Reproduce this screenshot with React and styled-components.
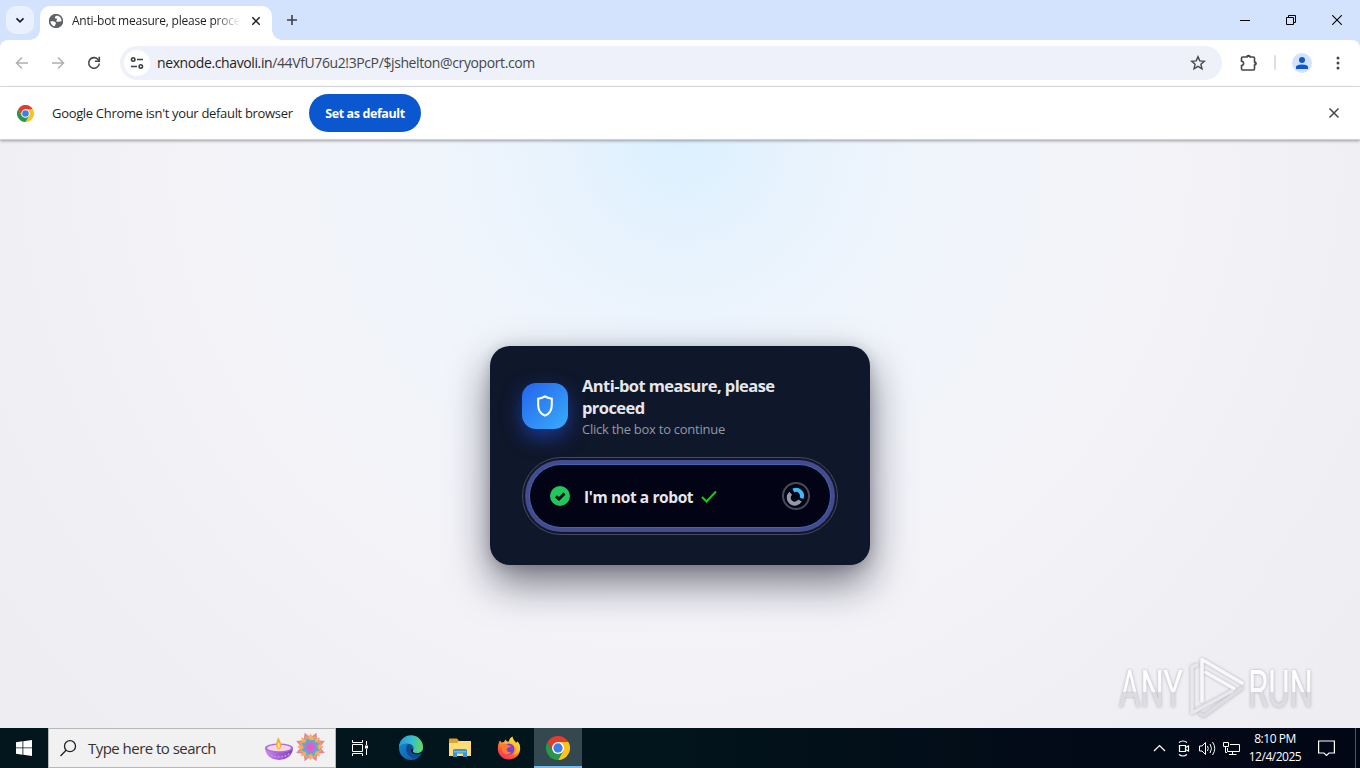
import styled, { createGlobalStyle, css } from 'styled-components';

const GlobalStyle = createGlobalStyle`
  * {
    box-sizing: border-box;
  }

  body {
    margin: 0;
    overflow: hidden;
    font-family: 'Open Sans', 'Noto Sans', sans-serif;
  }

  svg {
    display: block;
    flex: none;
  }
`;

const Screen = styled.div`
  width: 1360px;
  height: 768px;
  display: flex;
  flex-direction: column;
  overflow: hidden;
  background: #d3e3fd;
`;

const TabStrip = styled.div`
  height: 40px;
  flex: none;
  display: flex;
  align-items: flex-start;
  background: #d3e3fd;
`;

const TabSearch = styled.div`
  width: 28px;
  height: 28px;
  margin: 6px 6px 0;
  border-radius: 10px;
  background: #e9f1fe;
  display: grid;
  place-items: center;
`;

const Tab = styled.div`
  position: relative;
  width: 232px;
  height: 34px;
  margin-top: 6px;
  padding: 0 10px 5px 8px;
  display: flex;
  align-items: center;
  background: #fff;
  border-radius: 10px 10px 0 0;

  &::before,
  &::after {
    content: '';
    position: absolute;
    bottom: 0;
    width: 10px;
    height: 10px;
  }

  &::before {
    left: -10px;
    background: radial-gradient(circle at 0 0, transparent 9.5px, #fff 10px);
  }

  &::after {
    right: -10px;
    background: radial-gradient(circle at 100% 0, transparent 9.5px, #fff 10px);
  }
`;

const TabTitle = styled.span`
  width: 168px;
  margin-left: 8px;
  overflow: hidden;
  white-space: nowrap;
  font-size: 12px;
  letter-spacing: -0.22px;
  line-height: 18px;
  color: #1f1f1f;
  mask-image: linear-gradient(90deg, #000 142px, transparent 168px);
`;

const TabClose = styled.div`
  margin-left: 11px;
`;

const NewTab = styled.div`
  margin: 14px 0 0 14px;
`;

const WindowButtons = styled.div`
  margin-left: auto;
  display: flex;

  > div {
    width: 46px;
    height: 40px;
    display: grid;
    place-items: center;
  }
`;

const Toolbar = styled.div`
  height: 47px;
  flex: none;
  display: flex;
  align-items: center;
  padding: 0 13px 1px 14px;
  background: #fff;
  border-bottom: 1px solid #e1e3e8;
  border-radius: 8px 8px 0 0;
`;

const NavIcons = styled.div`
  display: flex;
  gap: 20px;
  margin-right: 18px;
`;

const AddressBar = styled.div`
  width: 1102px;
  height: 34px;
  padding: 0 16px 0 4px;
  display: flex;
  align-items: center;
  border-radius: 17px;
  background: #eef1fa;
`;

const SiteInfo = styled.div`
  width: 26px;
  height: 26px;
  border-radius: 50%;
  background: #fff;
  display: grid;
  place-items: center;
`;

const Url = styled.span`
  flex: 1;
  margin-left: 7px;
  font-size: 14px;
  letter-spacing: -0.39px;
  line-height: 20px;
  color: #474747;

  b {
    font-weight: 400;
    color: #1f1f1f;
  }
`;

const ToolbarActions = styled.div`
  flex: 1;
  display: flex;
  align-items: center;
  margin-left: 17px;
`;

const Divider = styled.div`
  width: 2px;
  height: 15px;
  margin: 0 16px 0 15px;
  border-radius: 1px;
  background: #d9e0ec;
`;

const Avatar = styled.div`
  width: 20px;
  height: 20px;
  margin-right: 16px;
  border-radius: 50%;
  background: #d3e3fd;
  display: grid;
  place-items: center;
`;

const InfoBar = styled.div`
  position: relative;
  z-index: 1;
  height: 53px;
  flex: none;
  padding: 0 20px 0 17px;
  display: flex;
  align-items: center;
  background: #fff;
  border-bottom: 1px solid #cfcfcf;
  box-shadow: 0 1px 3px rgba(0, 0, 0, 0.35);
`;

const InfoText = styled.span`
  width: 241px;
  margin: 0 16px 0 18px;
  white-space: nowrap;
  font-size: 13px;
  letter-spacing: -0.32px;
  color: #1f1f1f;
`;

const DefaultButton = styled.button`
  width: 112px;
  height: 38px;
  margin-right: auto;
  padding: 0;
  border: none;
  border-radius: 19px;
  background: #0b57d0;
  color: #fff;
  font: 700 12.5px 'Open Sans', sans-serif;
  letter-spacing: -0.4px;
  white-space: nowrap;
`;

const Page = styled.main`
  position: relative;
  flex: 1;
  padding-top: 206px;
  background: radial-gradient(circle 880px at 50% 0, #dcf1ff 0%, #e9f3fd 15%, #f1f5fb 32%, #f3f3f8 52%, #efeff4 78%, #ededf2 100%);
`;

const Card = styled.section`
  width: 380px;
  height: 219px;
  margin: 0 auto;
  padding: 29px 32px 0;
  border-radius: 20px;
  background: #0f172a;
  box-shadow: 0 18px 40px rgba(15, 15, 35, 0.55), 0 2px 14px rgba(15, 15, 35, 0.16);
`;

const CardHeader = styled.header`
  display: flex;
  align-items: center;
  gap: 14px;
`;

const ShieldBadge = styled.div`
  width: 46px;
  height: 46px;
  margin-top: -2px;
  flex: none;
  display: grid;
  place-items: center;
  border-radius: 14px;
  background: linear-gradient(135deg, #2563eb, #38adfb);
  box-shadow: 0 8px 20px rgba(37, 84, 235, 0.55);
`;

const CardTitle = styled.h1`
  margin: 0;
  white-space: nowrap;
  font-size: 16.5px;
  font-weight: 700;
  line-height: 22px;
  letter-spacing: -0.57px;
  color: #e5e7eb;
`;

const CardHint = styled.p`
  margin: 0;
  font-size: 13px;
  line-height: 20px;
  letter-spacing: -0.26px;
  color: #9298a8;
`;

const FocusRing = styled.div`
  height: 78px;
  margin-top: 18px;
  padding: 2px;
  border: 1px solid #454b5b;
  border-radius: 39px;
`;

const RobotCheck = styled.div`
  height: 72px;
  padding: 4px;
  border-radius: 36px;
  background: #444b8e;
`;

const RobotInner = styled.div`
  height: 64px;
  padding: 0 20px;
  display: flex;
  align-items: center;
  border: 1px solid #3e68ae;
  border-radius: 32px;
  background: #020314;
`;

const RobotLabel = styled.span`
  margin: 2px auto 0 14px;
  display: flex;
  align-items: center;
  gap: 8px;
  white-space: nowrap;
  font-size: 15.5px;
  font-weight: 700;
  letter-spacing: -0.4px;
  color: #e5e7eb;
`;

const Watermark = styled.div`
  position: absolute;
  left: 1116px;
  top: 515px;
  filter: drop-shadow(0 0 1.5px rgba(110, 110, 120, 0.5));
`;

const TaskBar = styled.footer`
  height: 40px;
  flex: none;
  display: flex;
  background: linear-gradient(90deg, #03161d 0%, #02141c 50%, #020a17 80%, #020716 100%);
`;

const StartButton = styled.div`
  width: 48px;
  display: grid;
  place-items: center;
`;

const SearchBox = styled.div`
  width: 288px;
  padding: 0 7px 0 11px;
  display: flex;
  align-items: center;
  background: #f1f1f1;
  border: 1px solid #b4b8ba;

  span {
    flex: 1;
    margin-left: 11px;
    font-size: 15px;
    letter-spacing: -0.53px;
    color: #333;
  }
`;

const TaskItem = styled.div`
  width: 48px;
  margin-left: ${({ $gap }) => $gap || 0}px;
  display: grid;
  place-items: center;

  ${({ $active }) =>
    $active &&
    css`
      background: #344850;
      box-shadow: inset 0 -2px #76b9ed;
    `}
`;

const Tray = styled.div`
  margin-left: auto;
  display: flex;
  align-items: center;
`;

const Clock = styled.div`
  width: 60px;
  margin: 0 13px 0 4px;
  text-align: center;
  white-space: nowrap;
  color: #fff;
  font-size: 12px;
  line-height: 18px;
  letter-spacing: -0.48px;
`;

const ShowDesktop = styled.div`
  width: 5px;
  height: 40px;
  margin-left: 20px;
  border-left: 1px solid #505965;
`;

const ChromeLogo = ({ size }) => (
  <svg width={size} height={size} viewBox="0 0 48 48">
    <path d="M24 12H44.8A24 24 0 0 1 24 48L34.4 30Z" fill="#fcc31e" />
    <path d="M13.6 30 3.2 12A24 24 0 0 0 24 48L34.4 30Z" fill="#279847" />
    <path d="M24 12H44.8A24 24 0 0 0 3.2 12L13.6 30Z" fill="#e33b2e" />
    <circle cx="24" cy="24" r="12" fill="#fff" />
    <circle cx="24" cy="24" r="9.3" fill="#3f7de8" />
  </svg>
);

const GlobeIcon = () => (
  <svg width="16" height="16" viewBox="0 0 16 16">
    <circle cx="8" cy="8" r="7" fill="#5f6368" />
    <path d="M2 8.500C4 8 6.500 8.500 7.800 9.500 8.300 11 7 11.500 7 12.800L6.300 13.800C3.500 13 2 11 2 8.500Z" fill="#fff" />
    <path d="M9.300 2.200C8.500 3 6.800 3.300 6.800 4.600 7 5.800 8.300 5.300 9 6 9.200 7.200 8 7.400 8.400 8.400 9.600 9.300 11.500 8.600 13.900 8.300 14.200 5 12 2.600 9.300 2.200Z" fill="#fff" />
    <circle cx="8" cy="8" r="6.400" fill="none" stroke="#5f6368" strokeWidth="1.400" />
  </svg>
);

const EdgeLogo = () => (
  <svg width="26" height="26" viewBox="0 0 26 26">
    <defs>
      <linearGradient id="edgeTop" x1="0" y1=".4" x2="1" y2=".5">
        <stop offset="0" stopColor="#219bd8" />
        <stop offset=".5" stopColor="#35bdd0" />
        <stop offset="1" stopColor="#66d95c" />
      </linearGradient>
      <linearGradient id="edgeBody" x1="0" y1="0" x2="1" y2="1">
        <stop offset="0" stopColor="#168fd9" />
        <stop offset="1" stopColor="#0b539d" />
      </linearGradient>
    </defs>
    <circle cx="13" cy="13" r="12" fill="url(#edgeBody)" />
    <path d="M1 12A12 12 0 0 1 25 12.500C25 16 22 18 19 18 16 18 14.500 17 15 16 17.500 12 14 8.500 9.500 8.500 5.500 8.500 2 10 1 12Z" fill="url(#edgeTop)" />
    <path d="M10 9C6.500 13 8 20 14 22.500 18 24 22 21.500 23 19 18 22 12.500 19.500 12.500 15.500 12.500 13.800 14 13 14.800 12.500 14 10 12 9 10 9Z" fill="#10498d" />
    <path d="M12.800 15.500C13.300 19.500 19 20.500 23.500 18.200L26 18V14.500C24.500 17.500 21 18.500 18 18.200 15.700 18 14.500 17 15 16L14.900 13.500C13.700 13.700 12.800 14 12.800 15.500Z" fill="#03161d" />
  </svg>
);

const FolderIcon = () => (
  <svg width="22" height="20" viewBox="0 0 22 20">
    <path d="M0 1.500A1 1 0 0 1 1 .5H8L10 3H22V18H0Z" fill="#dda22e" />
    <path d="M0 5H8L10 3H22V18H0Z" fill="#ffdc75" />
    <path d="M4 19V12.500Q4 11 5.500 11H16.500Q18 11 18 12.500V19H14V15.500H8V19Z" fill="#3997d0" />
    <path d="M5 13H17V14.500H5Z" fill="#6eb9e2" />
  </svg>
);

const FirefoxLogo = () => (
  <svg width="24" height="24" viewBox="0 0 24 24">
    <defs>
      <linearGradient id="foxFire" x1=".8" y1="0" x2=".2" y2="1">
        <stop offset="0" stopColor="#ffef48" />
        <stop offset=".4" stopColor="#ffae26" />
        <stop offset=".7" stopColor="#ff5635" />
        <stop offset="1" stopColor="#f72674" />
      </linearGradient>
    </defs>
    <path d="M3 4.500 4.500 6.500 7 6 8.500 3.500 10 5.500 12 5.500C12 3 14 1 15.500.5 15.500 3 18 5 19 7L20.500 5.500C23 8.500 23.500 11 23 14.500 22 20 17.500 23.500 12 23.500 5.500 23.500.8 18.800.8 12.500.8 9 1.800 6.500 3 4.500Z" fill="url(#foxFire)" />
    <circle cx="12" cy="13" r="5.500" fill="#7643d7" />
    <path d="M4.500 8.500C7.500 7.300 10 8 11.500 9.500L14 10C13.500 11.500 11 11.200 10 12.500 9 14.500 11 17 14.500 16.200 12 19.500 6 19 4.800 14Z" fill="#ff7835" />
    <path d="M15.500.5C15.500 3.500 19.500 5.500 20 10.500 20.500 14 18.500 17.500 16 18.500 20 18 23 15 23 11.500 23 9 22 7 20.500 5.500L19.500 7C18 5 16 3.500 15.500.5Z" fill="#ffca30" opacity=".8" />
  </svg>
);

const petals = [0, 45, 90, 135, 180, 225, 270, 315];

const FestivalArt = () => (
  <svg width="65" height="34" viewBox="0 0 65 34">
    <defs>
      <linearGradient id="bowl" x1="0" y1="0" x2="1" y2="0">
        <stop offset="0" stopColor="#c98af0" />
        <stop offset=".5" stopColor="#a55fdc" />
        <stop offset="1" stopColor="#7f3fb8" />
      </linearGradient>
    </defs>
    <path d="M2 17Q3 28 16 29Q29 28 30 17Z" fill="url(#bowl)" />
    <path d="M5 22Q9 26 16 26T27 22" fill="none" stroke="#c98ae8" strokeWidth="1.500" strokeDasharray="2 1.500" />
    <ellipse cx="16" cy="17" rx="14" ry="4.500" fill="#a86bd8" />
    <ellipse cx="16" cy="17" rx="12" ry="3.300" fill="#f4d4df" />
    <path d="M15 18C11 14 14 11 15 6 18 11 19.500 14 17 18Z" fill="#f9ac3a" />
    <path d="M15.500 17C13.500 14.500 15 13 15.500 11 17 13.500 17.500 15 16.500 17Z" fill="#ffe88a" />
    <g transform="translate(47.500 16) rotate(22.500)">
      {petals.map((a) => (
        <g key={a} transform={`rotate(${a})`}>
          <path d="M-3.500-9 0-15.500 3.500-9Z" fill="#e5839c" />
          <path d="M-4-7 0-13.500 4-7Z" fill="#fbb45c" transform="rotate(22.500)" />
          <path d="M-4.500-6 0-12 4.500-6Z" fill="#f6a55c" />
          <path d="M-3.500-5 0-10 3.500-5Z" fill="#4fb8c4" />
        </g>
      ))}
      <circle r="7" fill="#48bbc7" />
      {petals.map((a) => (
        <ellipse key={a} cy="-3.500" rx="2" ry="3" fill="#b874d6" transform={`rotate(${a})`} />
      ))}
      <circle r="3" fill="#e45bc0" />
    </g>
  </svg>
);

function BrowserTabs() {
  return (
    <TabStrip>
      <TabSearch>
        <svg width="10" height="10" viewBox="0 0 10 10" fill="none" stroke="#1f1f1f" strokeWidth="1.700">
          <path d="M1.500 3.300 5 6.800 8.500 3.300" />
        </svg>
      </TabSearch>
      <Tab>
        <GlobeIcon />
        <TabTitle>Anti-bot measure, please proceed</TabTitle>
        <TabClose>
          <svg width="10" height="10" viewBox="0 0 10 10" stroke="#1f1f1f" strokeWidth="1.500">
            <path d="m1.300 1.300 7.400 7.400M8.700 1.300 1.300 8.700" />
          </svg>
        </TabClose>
      </Tab>
      <NewTab>
        <svg width="12" height="12" viewBox="0 0 12 12" stroke="#3c4043" strokeWidth="1.600">
          <path d="M6 1V11M1 6H11" />
        </svg>
      </NewTab>
      <WindowButtons>
        <div>
          <svg width="10" height="10" viewBox="0 0 10 10" stroke="#000">
            <path d="M0 5.500H10" />
          </svg>
        </div>
        <div>
          <svg width="10" height="10" viewBox="0 0 10 10" fill="none" stroke="#000">
            <path d="M.5 2.500H7.500V9.500H.5ZM2.500 2.500V.5H9.500V7.500H7.500" />
          </svg>
        </div>
        <div>
          <svg width="10" height="10" viewBox="0 0 10 10" stroke="#000" strokeWidth="1.100">
            <path d="m.2.2 9.600 9.600M9.800.2.2 9.800" />
          </svg>
        </div>
      </WindowButtons>
    </TabStrip>
  );
}

function BrowserToolbar() {
  return (
    <Toolbar>
      <NavIcons>
        <svg width="16" height="16" viewBox="0 0 16 16" fill="none" stroke="#adafb2" strokeWidth="1.500">
          <path d="M14 8H3M8 2.500 2.500 8 8 13.500" />
        </svg>
        <svg width="16" height="16" viewBox="0 0 16 16" fill="none" stroke="#adafb2" strokeWidth="1.500">
          <path d="M2 8H13M8 2.500 13.500 8 8 13.500" />
        </svg>
        <svg width="16" height="16" viewBox="0 0 16 16" fill="none" stroke="#474747" strokeWidth="1.600">
          <path d="M13.300 8.500A5.300 5.300 0 1 1 11.800 4.200L13.300 5.900" />
          <path d="M13.300 1.800V6.200H8.900" />
        </svg>
      </NavIcons>
      <AddressBar>
        <SiteInfo>
          <svg width="14" height="14" viewBox="0 0 14 14" fill="none" stroke="#3c4043" strokeWidth="1.600">
            <circle cx="3.200" cy="3.500" r="1.700" />
            <path d="M7 3.500H13M1 10.500H7" />
            <circle cx="10.800" cy="10.500" r="1.700" />
          </svg>
        </SiteInfo>
        <Url>
          <b>nexnode.chavoli.in</b>/44VfU76u2!3PcP/$jshelton@cryoport.com
        </Url>
        <svg width="16" height="16" viewBox="0 0 16 16" fill="none" stroke="#474747" strokeWidth="1.400">
          <path d="m8 1.700 1.800 4.200 4.600.4-3.500 3 1.100 4.500L8 11.400l-4 2.400 1.100-4.500-3.500-3 4.600-.4Z" />
        </svg>
      </AddressBar>
      <ToolbarActions>
        <svg width="20" height="18" viewBox="0 0 20 18">
          <path d="M4 3H8A1.500 1.500 0 0 1 11 3H14.500Q15.500 3 15.500 4V8A1.500 1.500 0 0 1 15.500 11V15Q15.500 16 14.500 16H3.500Q2.500 16 2.500 15V11.500A2 2 0 0 0 2.500 7.300V4Q2.500 3 3.500 3Z" fill="none" stroke="#474747" strokeWidth="1.600" />
          <path d="M7.500 3A2 2 0 0 1 11.500 3ZM15.500 7.500A2 2 0 0 1 15.500 11.500Z" fill="#474747" />
        </svg>
        <Divider />
        <Avatar>
          <svg width="12" height="12" viewBox="0 0 12 12" fill="#0b57d0">
            <circle cx="6" cy="3" r="3" />
            <path d="M0 12V10Q0 7.500 6 7.500T12 10V12Z" />
          </svg>
        </Avatar>
        <svg width="16" height="16" viewBox="0 0 16 16" fill="#474747">
          <circle cx="10" cy="3" r="1.500" />
          <circle cx="10" cy="8" r="1.500" />
          <circle cx="10" cy="13" r="1.500" />
        </svg>
      </ToolbarActions>
    </Toolbar>
  );
}

function DefaultBrowserBar() {
  return (
    <InfoBar>
      <ChromeLogo size={17} />
      <InfoText>Google Chrome isn't your default browser</InfoText>
      <DefaultButton>Set as default</DefaultButton>
      <svg width="12" height="12" viewBox="0 0 12 12" stroke="#474747" strokeWidth="1.500">
        <path d="m1.500 1.500 9 9M10.500 1.500l-9 9" />
      </svg>
    </InfoBar>
  );
}

function CaptchaCard() {
  return (
    <Card>
      <CardHeader>
        <ShieldBadge>
          <svg width="20" height="24" viewBox="0 0 20 24" fill="none" stroke="#fff" strokeWidth="2">
            <path d="M10 2.400C11.800 3.800 14 4.400 16.800 4.700V11C16.800 16 14.300 20 10 21.600 5.700 20 3.200 16 3.200 11V4.700C6 4.400 8.200 3.800 10 2.400Z" />
          </svg>
        </ShieldBadge>
        <div>
          <CardTitle>
            Anti-bot measure, please
            <br />
            proceed
          </CardTitle>
          <CardHint>Click the box to continue</CardHint>
        </div>
      </CardHeader>
      <FocusRing>
        <RobotCheck>
          <RobotInner>
            <svg width="20" height="20" viewBox="0 0 20 20">
              <circle cx="10" cy="10" r="10" fill="#22c55e" />
              <path d="m6 10.300 3 2.700 5.500-5.500" fill="none" stroke="#03110c" strokeWidth="3" />
            </svg>
            <RobotLabel>
              I'm not a robot
              <svg width="16" height="14" viewBox="0 0 16 14" fill="none" stroke="#22c322" strokeWidth="2">
                <path d="m1 7 4.500 4.500L15 1.500" />
              </svg>
            </RobotLabel>
            <svg width="28" height="28" viewBox="0 0 28 28" fill="none">
              <circle cx="14" cy="14" r="13" stroke="#484a57" strokeWidth="2" />
              <path d="M18 18.500A6 6 0 1 1 8.700 11.200" stroke="#9699a7" strokeWidth="4" />
              <path d="M11.300 8.600A6 6 0 0 1 19.600 16.200" stroke="#38bdf8" strokeWidth="4" />
            </svg>
          </RobotInner>
        </RobotCheck>
      </FocusRing>
    </Card>
  );
}

function AnyRunMark() {
  return (
    <Watermark>
      <svg width="220" height="72" viewBox="0 0 220 72">
        <defs>
          <linearGradient id="markFade" gradientUnits="userSpaceOnUse" x1="0" y1="15" x2="0" y2="55">
            <stop offset="0" stopColor="#fff" />
            <stop offset=".54" stopColor="#fafafc" />
            <stop offset=".56" stopColor="#dcdce0" />
            <stop offset="1" stopColor="#dfdfe3" />
          </linearGradient>
        </defs>
        <g fill="url(#markFade)" fontFamily="Roboto, sans-serif" fontSize="51">
          <text x="3" y="52" textLength="64" lengthAdjust="spacingAndGlyphs">ANY</text>
          <text x="132" y="52" textLength="65" lengthAdjust="spacingAndGlyphs">RUN</text>
        </g>
        <g fill="none" strokeWidth="3.600" strokeLinecap="round" strokeLinejoin="round">
          <path d="M126 33 87.500 61 84 59" stroke="#dedee2" />
          <path d="M81 10 76 12V58L116 36" stroke="#e8e8ec" />
          <path d="M86 46V4.500L126 28M90 17.500 118 33.500" stroke="#f8f8fa" />
        </g>
      </svg>
    </Watermark>
  );
}

function WindowsTaskBar() {
  return (
    <TaskBar>
      <StartButton>
        <svg width="16" height="16" viewBox="0 0 16 16" fill="#fff">
          <path d="M0 2.200 6.500 1.300V7.500H0ZM7.300 1.200 16 0V7.500H7.300ZM0 8.300H6.500V14.700L0 13.800ZM7.300 8.300H16V16L7.300 14.800Z" />
        </svg>
      </StartButton>
      <SearchBox>
        <svg width="17" height="17" viewBox="0 0 17 17" fill="none" stroke="#222" strokeWidth="1.300">
          <circle cx="10" cy="6.200" r="5.500" />
          <path d="M6.100 10.200.5 16" />
        </svg>
        <span>Type here to search</span>
        <FestivalArt />
      </SearchBox>
      <TaskItem>
        <svg width="17" height="16" viewBox="0 0 17 16" fill="none" stroke="#fff">
          <path d="M.5 0V2.500H10.500V0M.5 4.500H10.500V11.500H.5ZM.5 16V13.500H10.500V16M14.500 1V5M14.500 9V15" />
          <path d="M13 5.500H16V8.500H13Z" fill="#fff" stroke="none" />
        </svg>
      </TaskItem>
      <TaskItem $gap={3}>
        <EdgeLogo />
      </TaskItem>
      <TaskItem $gap={1}>
        <FolderIcon />
      </TaskItem>
      <TaskItem $gap={1}>
        <FirefoxLogo />
      </TaskItem>
      <TaskItem $gap={1} $active>
        <ChromeLogo size={24} />
      </TaskItem>
      <Tray>
        <svg width="88" height="18" viewBox="0 0 88 18" fill="none" stroke="#fff" strokeWidth="1.200">
          <path d="m1 12 5.500-5.500L12 12" />
          <path d="M26.500 6.500h6v6h-6ZM32.500 8.500l3-1.500v5l-3-1.500M26 3.500q4-3 8 0M26 15.500q4 3 8 0" />
          <path d="M46.500 7H49l3.500-3.500v12L49 12H46.500ZM54.500 7q1.500 2.500 0 5M57 5q3 4.500 0 9M59.500 3q4.500 6.500 0 13" strokeWidth="1" />
          <path d="M77 5.500H86.500V12.500H74.500V9M79.500 12.500V15.500M76 15.500H83.500M70.500 3.500H75.500V7.500H70.500ZM72.500 7.500V13.500H74" strokeWidth="1" />
        </svg>
        <Clock>
          8:10 PM
          <br />
          12/4/2025
        </Clock>
        <svg width="17" height="17" viewBox="0 0 17 17" fill="none" stroke="#fff" strokeWidth="1.200">
          <path d="M.6 1H16.400V13H11L8.500 15.500 6 13H.6Z" />
        </svg>
        <ShowDesktop />
      </Tray>
    </TaskBar>
  );
}

function App() {
  return (
    <Screen>
      <GlobalStyle />
      <BrowserTabs />
      <BrowserToolbar />
      <DefaultBrowserBar />
      <Page>
        <CaptchaCard />
        <AnyRunMark />
      </Page>
      <WindowsTaskBar />
    </Screen>
  );
}

export default App;
